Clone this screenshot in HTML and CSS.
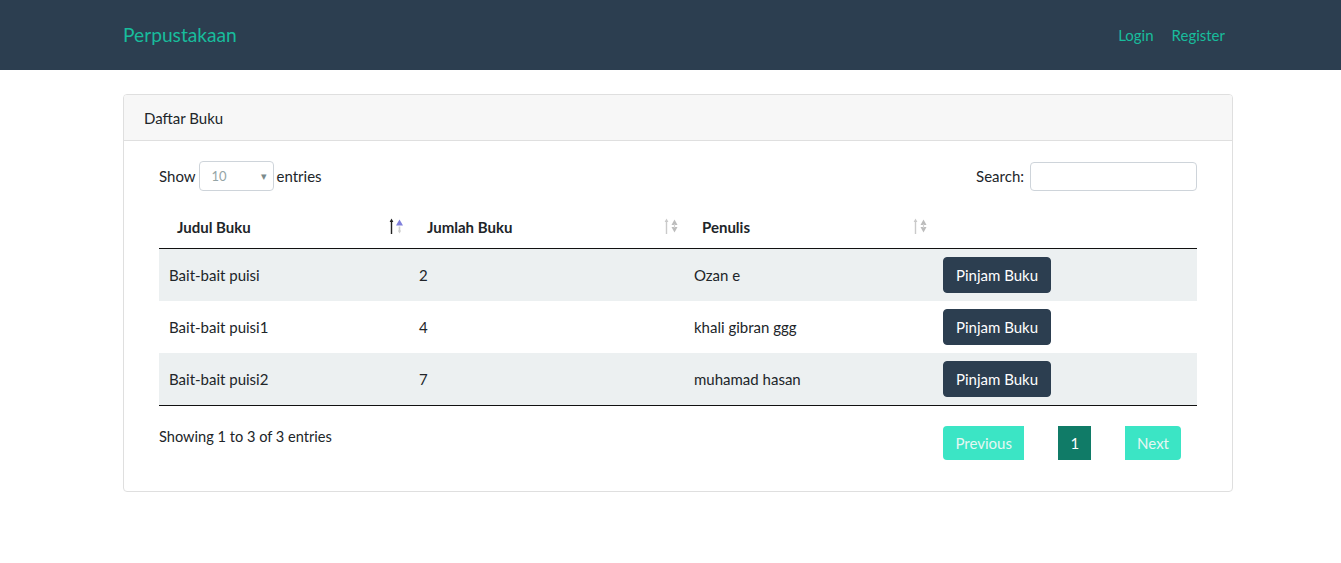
FILE: index.html
```html
<!DOCTYPE html>
<html lang="id">
<head>
<meta charset="utf-8">
<title>Perpustakaan</title>
<link rel="stylesheet" href="styles.css">
</head>
<body>
<nav class="navbar">
  <div class="container nav-inner">
    <a class="brand" href="#">Perpustakaan</a>
    <ul class="nav-links">
      <li><a href="#">Login</a></li>
      <li><a href="#">Register</a></li>
    </ul>
  </div>
</nav>

<main class="container main">
  <section class="card">
    <div class="card-header">Daftar Buku</div>
    <div class="card-body">
      <div class="controls">
        <label class="length">Show
          <span class="select"><span class="select-val">10</span><span class="caret">&#9662;</span></span>
          entries</label>
        <label class="search">Search: <span class="search-input"></span></label>
      </div>

      <table class="table">
        <thead>
          <tr>
            <th class="c1"><div class="th-in"><span>Judul Buku</span>
              <svg class="sort" width="14" height="18" viewBox="0 0 14 18"><path d="M2.5 4v13" stroke="#222" stroke-width="1.4"/><path d="M0.6 5L2.5 1.5L4.4 5Z" fill="#222"/><path d="M7 8.5L10.5 2.5L14 8.5Z" fill="#8080dc"/><path d="M10.5 9.5v4.5" stroke="#cfcfcf" stroke-width="1.6"/><path d="M8.8 13.5L10.5 16.5L12.2 13.5Z" fill="#cfcfcf"/></svg>
            </div></th>
            <th class="c2"><div class="th-in"><span>Jumlah Buku</span>
              <svg class="sort" width="14" height="18" viewBox="0 0 14 18"><path d="M2.5 4v13" stroke="#cacaca" stroke-width="1.4"/><path d="M0.6 5L2.5 1.5L4.4 5Z" fill="#cacaca"/><path d="M7.5 8L10.5 2.5L13.5 8Z" fill="#bcbcbc"/><path d="M7.5 10L10.5 15.5L13.5 10Z" fill="#bcbcbc"/><path d="M10.5 7v4" stroke="#d2d2d2" stroke-width="1.2"/></svg>
            </div></th>
            <th class="c3"><div class="th-in"><span>Penulis</span>
              <svg class="sort" width="14" height="18" viewBox="0 0 14 18"><path d="M2.5 4v13" stroke="#cacaca" stroke-width="1.4"/><path d="M0.6 5L2.5 1.5L4.4 5Z" fill="#cacaca"/><path d="M7.5 8L10.5 2.5L13.5 8Z" fill="#bcbcbc"/><path d="M7.5 10L10.5 15.5L13.5 10Z" fill="#bcbcbc"/><path d="M10.5 7v4" stroke="#d2d2d2" stroke-width="1.2"/></svg>
            </div></th>
            <th class="c4"></th>
          </tr>
        </thead>
        <tbody>
          <tr class="odd">
            <td>Bait-bait puisi</td><td>2</td><td>Ozan e</td>
            <td><button class="btn">Pinjam Buku</button></td>
          </tr>
          <tr>
            <td>Bait-bait puisi1</td><td>4</td><td>khali gibran ggg</td>
            <td><button class="btn">Pinjam Buku</button></td>
          </tr>
          <tr class="odd">
            <td>Bait-bait puisi2</td><td>7</td><td>muhamad hasan</td>
            <td><button class="btn">Pinjam Buku</button></td>
          </tr>
        </tbody>
      </table>

      <div class="footer-row">
        <div class="info">Showing 1 to 3 of 3 entries</div>
        <ul class="pagination">
          <li class="page prev">Previous</li>
          <li class="page current">1</li>
          <li class="page next">Next</li>
        </ul>
      </div>
    </div>
  </section>
</main>
</body>
</html>
```

FILE: styles.css
```css
* { box-sizing: border-box; }

body {
  margin: 0;
  font-family: Lato, "Open Sans", sans-serif;
  font-size: 15px;
  line-height: 22px;
  color: #212529;
  background: #fff;
}

.container {
  width: 1110px;
  margin-left: calc(50% - 547.5px);
}

.navbar {
  background: #2c3e50;
  height: 70px;
}

.nav-inner {
  height: 70px;
  display: flex;
  align-items: center;
  justify-content: space-between;
}

.brand {
  color: #18bc9c;
  text-decoration: none;
  font-size: 19.2px;
  line-height: 28px;
}

.nav-links {
  list-style: none;
  margin: 0;
  padding: 0;
  display: flex;
  gap: 2px;
}

.nav-links a {
  display: block;
  color: #18bc9c;
  text-decoration: none;
  padding: 0 8px;
  line-height: 28px;
}

.main {
  padding-top: 24px;
}

.card {
  border: 1px solid #dfdfdf;
  border-radius: 4px;
  overflow: hidden;
}

.card-header {
  background: #f7f7f7;
  border-bottom: 1px solid #dfdfdf;
  padding: 12px 20px 11px;
  line-height: 22px;
}

.card-body {
  padding: 20px 35px 31px;
}

.controls {
  display: flex;
  justify-content: space-between;
  align-items: center;
  height: 30px;
}

.length, .search {
  display: flex;
  align-items: center;
  gap: 3px;
}

.select {
  width: 75px;
  height: 30px;
  border: 1px solid #ced4da;
  border-radius: 4px;
  display: flex;
  align-items: center;
  justify-content: space-between;
  padding: 0 6px 0 12px;
  color: #95a5a6;
  font-size: 13px;
}

.caret {
  font-size: 11px;
  color: #7b8a8b;
}

.search-input {
  display: block;
  width: 167px;
  height: 29px;
  border: 1px solid #ced4da;
  border-radius: 4px;
  margin-left: 3px;
}

.table {
  width: 100%;
  border-collapse: collapse;
  margin-top: 15px;
  table-layout: fixed;
}

.c1 { width: 250px; }
.c2 { width: 275px; }
.c3 { width: 249px; }

.table th {
  text-align: left;
  font-weight: 700;
  padding: 10px 6px 10px 18px;
  line-height: 22px;
  border-bottom: 1px solid #111;
}

.th-in {
  display: flex;
  justify-content: space-between;
  align-items: center;
}

.sort {
  display: block;
  margin-top: -3px;
}

.table td {
  padding: 8px 10px;
  height: 52px;
  vertical-align: middle;
}

.table tbody tr.odd {
  background: #ecf0f1;
}

.table tbody tr:last-child td {
  border-bottom: 1px solid #111;
}

.btn {
  font-family: inherit;
  font-size: 15px;
  line-height: 22px;
  color: #fff;
  background: #2c3e50;
  border: 1px solid #2c3e50;
  border-radius: 4px;
  padding: 6px 12px;
  cursor: pointer;
}

.footer-row {
  display: flex;
  justify-content: space-between;
  align-items: flex-start;
  margin-top: 20px;
}

.info {
  font-size: 14.6px;
  line-height: 22px;
}

.pagination {
  list-style: none;
  margin: 0 16px 0 0;
  padding: 0;
  display: flex;
  gap: 34px;
}

.page {
  height: 34px;
  line-height: 22px;
  padding: 6px 12px;
  color: #e6f7f3;
  background: #3be5c5;
}

.prev { border-radius: 4px 0 0 4px; padding: 6px 12.5px; }
.next { border-radius: 0 4px 4px 0; }

.current {
  background: #107b67;
  color: #fff;
  padding: 6px 12px;
}
```
